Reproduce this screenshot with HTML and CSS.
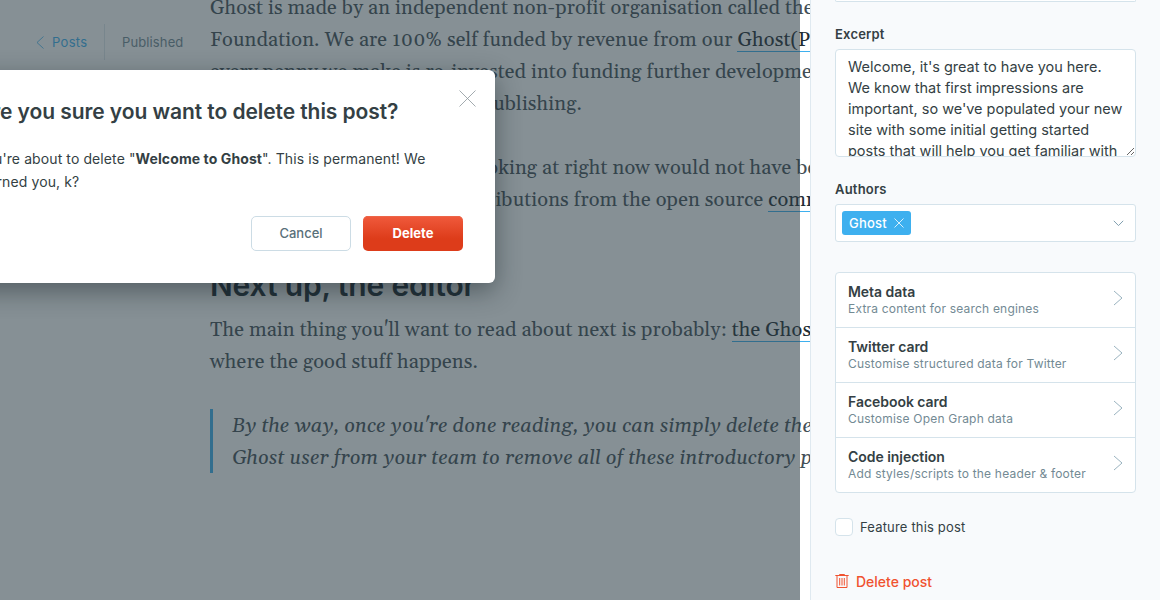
FILE: index.html
```html
<!DOCTYPE html>
<html lang="en">
<head>
<meta charset="utf-8">
<title>Welcome to Ghost</title>
<link rel="stylesheet" href="styles.css">
</head>
<body>
<div class="app">
  <main class="editor">
    <header class="editor-nav">
      <a class="back"><svg width="8" height="13" viewBox="0 0 8 13"><path d="M7.5 .5 1 6.5l6.5 6"/></svg><span>Posts</span></a>
      <span class="status">Published</span>
    </header>
    <article class="post">
      <p>Ghost is made by an independent non-profit organisation called the Ghost<br>Foundation. We are 100% self funded by revenue from our <a>Ghost(Pro)</a><br>every penny we make is re-invested into funding further development of<br><span class="tail">open source tech for modern publishing.</span></p>
      <p>The version of Ghost you are looking at right now would not have been made<br>possible without generous contributions from the open source <a>community</a></p>
      <h2>Next up, the editor</h2>
      <p class="intro">The main thing you'll want to read about next is probably: <a>the Ghost editor</a><br>where the good stuff happens.</p>
      <blockquote>By the way, once you're done reading, you can simply delete the default<br>Ghost user from your team to remove all of these introductory posts!</blockquote>
    </article>
  </main>
  <aside class="settings">
    <div class="prev-input"></div>
    <label class="label excerpt-label">Excerpt</label>
    <textarea class="excerpt" spellcheck="false">Welcome, it's great to have you here.
We know that first impressions are
important, so we've populated your new
site with some initial getting started
posts that will help you get familiar with
everything in no time.</textarea>
    <label class="label authors-label">Authors</label>
    <div class="select">
      <span class="token">Ghost<svg width="10" height="10" viewBox="0 0 10 10"><path d="m.5.5 9 9M9.5.5l-9 9"/></svg></span>
      <svg class="down" width="11" height="7" viewBox="0 0 11 7"><path d="m.8.8 4.7 4.8L10.2.8"/></svg>
    </div>
    <ul class="menu">
      <li><div><b>Meta data</b><span>Extra content for search engines</span></div><svg width="10" height="16" viewBox="0 0 10 16"><path d="m1 1 8 7-8 7"/></svg></li>
      <li><div><b>Twitter card</b><span>Customise structured data for Twitter</span></div><svg width="10" height="16" viewBox="0 0 10 16"><path d="m1 1 8 7-8 7"/></svg></li>
      <li><div><b>Facebook card</b><span>Customise Open Graph data</span></div><svg width="10" height="16" viewBox="0 0 10 16"><path d="m1 1 8 7-8 7"/></svg></li>
      <li><div><b>Code injection</b><span>Add styles/scripts to the header &amp; footer</span></div><svg width="10" height="16" viewBox="0 0 10 16"><path d="m1 1 8 7-8 7"/></svg></li>
    </ul>
    <div class="feature"><i></i><span>Feature this post</span></div>
    <div class="remove"><svg width="14" height="15" viewBox="0 0 14 15"><path d="M.3 1.5h13.4M4.5 1.5V.5h5v1M2 1.5v12h10v-12M4.7 4v7.5M7 4v7.5M9.3 4v7.5"/></svg><span>Delete post</span></div>
  </aside>
  <div class="overlay">
    <section class="modal">
      <svg class="close" width="17" height="17" viewBox="0 0 17 17"><path d="m.5.5 16 16M16.5.5l-16 16"/></svg>
      <h1>Are you sure you want to delete this post?</h1>
      <p>You're about to delete "<strong>Welcome to Ghost</strong>". This is permanent! We<br>warned you, k?</p>
      <div class="actions"><button class="btn">Cancel</button><button class="btn danger">Delete</button></div>
    </section>
  </div>
</div>
</body>
</html>
```
FILE: styles.css
```css
* { box-sizing: border-box; }
body { margin: 0; font-family: Inter, "Liberation Sans", sans-serif; color: #343f44; }
svg { fill: none; stroke: currentColor; flex: none; display: block; }
.app { position: relative; display: flex; width: 1160px; height: 600px; overflow: hidden; background: #fff; }
.editor { display: flex; width: 810px; height: 600px; overflow: hidden; flex: none; }
.editor-nav { display: flex; width: 210px; height: 36px; margin-top: 24px; padding-left: 36px; align-items: center; flex: none; font-size: 13px; letter-spacing: .3px; }
.back { display: flex; width: 69px; height: 36px; gap: 8px; align-items: center; border-right: 1px solid #dfe7ed; color: #3eb0ef; }
.back svg { stroke-width: .8; }
.status { padding-left: 17px; color: #738a94; letter-spacing: .12px; }
.post { margin-top: -8px; font: 20px/32px Georgia, Gelasio, "Liberation Serif", serif; letter-spacing: .11px; color: #434f57; white-space: nowrap; }
.post p { margin: 0 0 32px; }
.post .intro { margin-bottom: 31px; }
.tail { word-spacing: 2.1px; }
.post a { color: #222c33; background: linear-gradient(#3eb0ef, #3eb0ef) 0 calc(100% - 1px) / 100% 1px no-repeat; }
.post h2 { margin: 49px 0 9px; font: 600 30px/40px Inter, sans-serif; letter-spacing: -.16px; color: #15212a; }
.post blockquote { height: 64px; margin: 0; padding: 1px 0 0 19px; border-left: 3px solid #3eb0ef; font-style: italic; }
.settings { width: 350px; height: 600px; flex: none; padding: 0 24px; border-left: 1px solid #dfe9f0; background: #f8fafc; overflow: hidden; }
.prev-input { width: 301px; height: 2px; border: 1px solid #d5e3eb; border-top: 0; border-radius: 0 0 4px 4px; background: #fff; }
.label { display: block; font-size: 13px; line-height: 20px; font-weight: 600; letter-spacing: .2px; }
.excerpt-label { margin-top: 22px; }
.excerpt { display: block; width: 301px; height: 108px; margin: 5px 0 0; padding: 6px 12px; border: 1px solid #d5e3eb; border-radius: 4px; background: #fff; color: #343f44; font: 14.5px/21px Inter, sans-serif; letter-spacing: -.02px; white-space: pre; overflow: hidden; resize: vertical; }
.authors-label { margin-top: 22px; }
.select { display: flex; width: 301px; height: 38px; margin-top: 5px; padding: 0 11px 0 6px; align-items: center; justify-content: space-between; border: 1px solid #d5e3eb; border-radius: 3px; background: #fff; }
.token { display: flex; height: 24px; width: 69px; padding: 0 7px; align-items: center; justify-content: space-between; border-radius: 3px; background: #3eb0ef; color: #fff; font-size: 13px; font-weight: 500; letter-spacing: .2px; }
.token svg { stroke-width: .8; }
.down { color: #809faf; }
.menu { width: 301px; margin: 30px 0 0; padding: 0; list-style: none; border: 1px solid #d5e3eb; border-radius: 4px; background: #fff; }
.menu li { display: flex; height: 55px; padding: 10px 12px 0; align-items: flex-start; justify-content: space-between; border-bottom: 1px solid #d5e3eb; }
.menu li:last-child { height: 54px; border: 0; }
.menu b { display: block; font-size: 14px; line-height: 17px; font-weight: 600; letter-spacing: -.04px; }
.menu span { display: block; font-size: 12px; line-height: 17px; color: #738a94; letter-spacing: .2px; }
.menu svg { margin-top: 7px; color: #809faf; stroke-width: .8; }
.feature { display: flex; height: 18px; margin-top: 25px; gap: 7px; align-items: center; font-size: 13px; letter-spacing: .17px; }
.feature i { width: 18px; height: 18px; border: 1px solid #d5e3eb; border-radius: 4px; background: #fff; }
.remove { display: flex; height: 20px; margin-top: 35px; gap: 7px; align-items: center; color: #f05230; font-size: 14px; font-weight: 500; }
.overlay { position: absolute; left: 0; top: 0; width: 800px; height: 600px; background: rgba(42,60,68,.57); overflow: hidden; }
.modal { position: absolute; left: -55px; top: 70px; width: 550px; height: 213px; padding: 25px 32px; border-radius: 6px; background: #fff; box-shadow: 0 8px 26px rgba(20,30,36,.45); white-space: nowrap; }
.modal h1 { margin: 0; font-size: 21px; line-height: 34px; font-weight: 600; letter-spacing: -.07px; }
.modal p { margin: 18px 0 0; font-size: 14px; line-height: 23px; letter-spacing: .1px; }
.close { position: absolute; right: 19px; top: 20px; color: #8b969b; stroke-width: .8; }
.actions { display: flex; margin-top: 23px; gap: 12px; justify-content: flex-end; }
.btn { width: 100px; height: 35px; padding: 0 0 1px; border: 1px solid #ccdce5; border-radius: 5px; background: #fff; color: #587079; font: 500 13px Inter, sans-serif; letter-spacing: 0; }
.danger { border: 0; background: linear-gradient(#f05a3c, #dd3c1a 65%); box-shadow: inset 0 1px 0 #ed6548; color: #fff; font-weight: 700; }
```
